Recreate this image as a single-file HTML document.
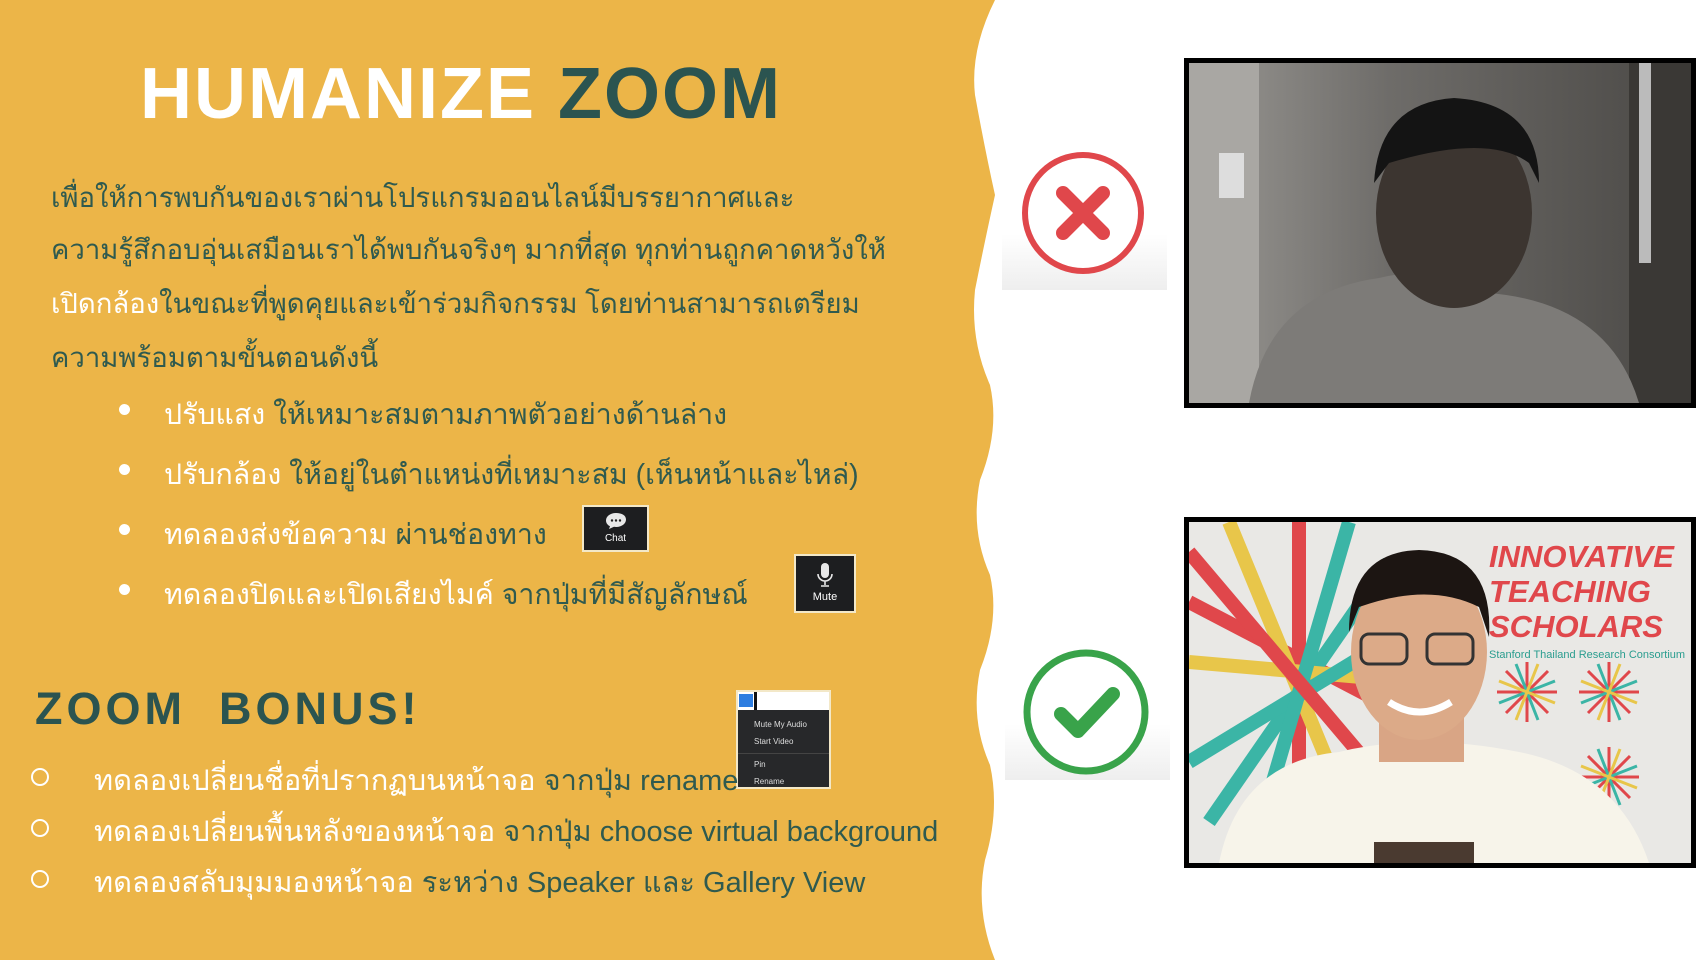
<!DOCTYPE html>
<html><head><meta charset="utf-8"><style>
*{margin:0;padding:0;box-sizing:border-box}
body{width:1707px;height:960px;background:#fff;position:relative;overflow:hidden;font-family:"Liberation Sans",sans-serif}
.a{position:absolute;white-space:nowrap}
.t{color:#2f5a4f;font-size:31px}
.p{font-size:27.5px}
.q{font-size:28.5px}
.r{font-size:29px}
.title{left:140px;top:53px;font-size:72px;letter-spacing:2px;font-weight:bold;color:#fff}
.title span{color:#2b5450}
.dot{width:11px;height:11px;border-radius:50%;background:#fff}
.circ{width:18px;height:18px;border-radius:50%;border:2px solid #fff}
.b{color:#fff}
</style></head><body>
<svg class="a" style="left:0;top:0" width="1010" height="960">
<path d="M0 0 H995 Q970 50 975 95 Q985 150 995 195 Q985 240 975 290 Q970 340 990 385 Q1000 430 980 480 Q970 530 990 575 Q1000 620 980 670 Q970 720 990 765 Q1000 810 985 860 Q975 910 995 960 H0 Z" fill="#ecb548"/>
</svg>
<div class="a title">HUMANIZE <span>ZOOM</span></div>
<div class="a t p" style="left:51px;top:176px">เพื่อให้การพบกันของเราผ่านโปรแกรมออนไลน์มีบรรยากาศและ</div>
<div class="a t p" style="left:51px;top:228px">ความรู้สึกอบอุ่นเสมือนเราได้พบกันจริงๆ มากที่สุด ทุกท่านถูกคาดหวังให้</div>
<div class="a t p" style="left:51px;top:282px"><span class="b">เปิดกล้อง</span>ในขณะที่พูดคุยและเข้าร่วมกิจกรรม โดยท่านสามารถเตรียม</div>
<div class="a t p" style="left:51px;top:336px">ความพร้อมตามขั้นตอนดังนี้</div>
<div class="a dot" style="left:119px;top:404px"></div>
<div class="a t q" style="left:164px;top:391px"><span class="b">ปรับแสง</span> ให้เหมาะสมตามภาพตัวอย่างด้านล่าง</div>
<div class="a dot" style="left:119px;top:464px"></div>
<div class="a t q" style="left:164px;top:451px"><span class="b">ปรับกล้อง</span> ให้อยู่ในตำแหน่งที่เหมาะสม (เห็นหน้าและไหล่)</div>
<div class="a dot" style="left:119px;top:524px"></div>
<div class="a t q" style="left:164px;top:511px"><span class="b">ทดลองส่งข้อความ</span> ผ่านช่องทาง</div>
<div class="a dot" style="left:119px;top:584px"></div>
<div class="a t q" style="left:164px;top:571px"><span class="b">ทดลองปิดและเปิดเสียงไมค์</span> จากปุ่มที่มีสัญลักษณ์</div>
<div class="a" style="left:582px;top:505px;width:67px;height:47px;background:#1d1e20;border:2px solid #f3e8c8;color:#fff;font-size:10px;text-align:center">
<svg width="22" height="18" style="margin-top:5px" viewBox="0 0 22 18"><path d="M11 1C5 1 1 4.5 1 8.5c0 2.5 1.5 4.5 4 5.8L4 17l5-2.2c.7.1 1.3.2 2 .2 6 0 10-3.5 10-7.5S17 1 11 1z" fill="#e8e8e8"/><circle cx="7" cy="8.5" r="1.2" fill="#222"/><circle cx="11" cy="8.5" r="1.2" fill="#222"/><circle cx="15" cy="8.5" r="1.2" fill="#222"/></svg><div>Chat</div></div>
<div class="a" style="left:794px;top:554px;width:62px;height:59px;background:#1d1e20;border:2px solid #f3e8c8;color:#fff;font-size:11px;text-align:center">
<svg width="16" height="26" style="margin-top:6px" viewBox="0 0 16 26"><rect x="4" y="1" width="8" height="15" rx="4" fill="#e8e8e8"/><path d="M1 12a7 7 0 0 0 14 0M8 19v4M4 24h8" stroke="#e8e8e8" stroke-width="1.6" fill="none"/></svg><div>Mute</div></div>
<div class="a" style="left:35px;top:683px;font-size:45px;font-weight:bold;letter-spacing:4px;color:#2b5450">ZOOM &nbsp;BONUS!</div>
<div class="a" style="left:736px;top:690px;width:95px;height:99px;background:#27282a;border:2px solid #f3e8c8;color:#ddd;font-size:8px">
<div style="height:18px;background:#fff;position:relative"><div style="position:absolute;left:1px;top:2px;width:14px;height:13px;background:#2d7de0"></div><div style="position:absolute;left:16px;top:0;width:3px;height:18px;background:#111"></div></div>
<div style="padding:6px 0 0 16px;line-height:17px">Mute My Audio<br>Start Video</div>
<div style="border-top:1px solid #444;margin-top:3px;padding:2px 0 0 16px;line-height:17px">Pin<br>Rename</div></div>
<div class="a circ" style="left:31px;top:768px"></div>
<div class="a t r" style="left:94px;top:757px"><span class="b">ทดลองเปลี่ยนชื่อที่ปรากฏบนหน้าจอ</span> จากปุ่ม rename</div>
<div class="a circ" style="left:31px;top:819px"></div>
<div class="a t r" style="left:94px;top:808px"><span class="b">ทดลองเปลี่ยนพื้นหลังของหน้าจอ</span> จากปุ่ม choose virtual background</div>
<div class="a circ" style="left:31px;top:870px"></div>
<div class="a t r" style="left:94px;top:859px"><span class="b">ทดลองสลับมุมมองหน้าจอ</span> ระหว่าง Speaker และ Gallery View</div>

<div class="a" style="left:1002px;top:150px;width:165px;height:140px;background:linear-gradient(#fff 60%,#eee)"></div>
<svg class="a" style="left:1019px;top:149px" width="128" height="128"><circle cx="64" cy="64" r="58" fill="#fff" stroke="#e0474b" stroke-width="6"/><path d="M44 44L84 84M84 44L44 84" stroke="#e0474b" stroke-width="14" stroke-linecap="round"/></svg>
<div class="a" style="left:1005px;top:640px;width:165px;height:140px;background:linear-gradient(#fff 60%,#eee)"></div>
<svg class="a" style="left:1021px;top:647px" width="130" height="130"><circle cx="65" cy="65" r="59" fill="#fff" stroke="#39a34a" stroke-width="7"/><path d="M40 67L57 84L92 47" stroke="#39a34a" stroke-width="14" fill="none" stroke-linecap="round" stroke-linejoin="round"/></svg>

<div class="a" style="left:1184px;top:58px;width:512px;height:350px;background:#000;padding:5px">
<svg width="502" height="340" viewBox="0 0 502 340"><defs><linearGradient id="g1" x1="0" x2="1"><stop offset="0" stop-color="#9a9894"/><stop offset=".4" stop-color="#6e6c69"/><stop offset="1" stop-color="#4a4845"/></linearGradient></defs>
<rect width="502" height="340" fill="url(#g1)"/><rect x="0" y="0" width="70" height="340" fill="#a9a7a3"/><rect x="440" y="0" width="62" height="340" fill="#3a3835"/><rect x="450" y="0" width="12" height="200" fill="#bbb"/>
<path d="M60 340Q80 230 190 215Q250 200 300 230Q420 240 450 340Z" fill="#7d7b78"/>
<ellipse cx="265" cy="150" rx="78" ry="95" fill="#3c3530"/><path d="M185 120Q190 40 265 35Q350 40 350 120L340 100Q300 70 200 100Z" fill="#141414"/>
<rect x="30" y="90" width="25" height="45" fill="#ddd"/></svg></div>

<div class="a" style="left:1184px;top:517px;width:512px;height:351px;background:#000;padding:5px">
<svg width="502" height="341" viewBox="0 0 502 341"><rect width="502" height="341" fill="#e9e8e5"/>
<g stroke-width="14"><path d="M110 0V341" stroke="#e0474b"/><path d="M0 80L230 200" stroke="#e0474b"/><path d="M20 300L200 40" stroke="#3bb5a6"/><path d="M0 140L230 160" stroke="#e8c64a"/><path d="M40 0L180 340" stroke="#e8c64a"/><path d="M0 240L230 100" stroke="#3bb5a6"/><path d="M160 0L60 341" stroke="#3bb5a6"/><path d="M0 30L220 290" stroke="#e0474b"/></g>
<g stroke-width="3"><g transform="translate(338,170)"><path d="M-30 0H30M0-30V30M-21-21L21 21M21-21L-21 21" stroke="#e0474b"/><path d="M-28 11L28-11M-11-28L11 28" stroke="#3bb5a6"/><path d="M-28-11L28 11M11-28L-11 28" stroke="#e8c64a"/></g><g transform="translate(420,170)"><path d="M-30 0H30M0-30V30M-21-21L21 21M21-21L-21 21" stroke="#e0474b"/><path d="M-28 11L28-11M-11-28L11 28" stroke="#3bb5a6"/><path d="M-28-11L28 11M11-28L-11 28" stroke="#e8c64a"/></g><g transform="translate(420,255)"><path d="M-30 0H30M0-30V30M-21-21L21 21M21-21L-21 21" stroke="#e0474b"/><path d="M-28 11L28-11M-11-28L11 28" stroke="#3bb5a6"/><path d="M-28-11L28 11M11-28L-11 28" stroke="#e8c64a"/></g></g>
<text x="300" y="45" font-family="Liberation Sans" font-weight="bold" font-style="italic" font-size="31" fill="#e0474b">INNOVATIVE</text>
<text x="300" y="80" font-family="Liberation Sans" font-weight="bold" font-style="italic" font-size="31" fill="#e0474b">TEACHING</text>
<text x="300" y="115" font-family="Liberation Sans" font-weight="bold" font-style="italic" font-size="31" fill="#e0474b">SCHOLARS</text>
<text x="300" y="136" font-family="Liberation Sans" font-size="11" fill="#2a9d8f">Stanford Thailand Research Consortium</text>
<path d="M30 341Q50 240 150 230Q230 210 330 230Q430 250 460 341Z" fill="#f7f4ea"/>
<rect x="190" y="150" width="85" height="90" fill="#d9a585"/>
<ellipse cx="230" cy="130" rx="68" ry="88" fill="#dcaa88"/><path d="M160 110Q160 30 230 28Q305 30 300 115L290 85Q240 60 170 85Z" fill="#1c1512"/>
<g fill="none" stroke="#333" stroke-width="3"><rect x="172" y="112" width="46" height="30" rx="8"/><rect x="238" y="112" width="46" height="30" rx="8"/></g>
<path d="M200 180Q230 200 262 180" stroke="#fff" stroke-width="7" fill="none"/>
<rect x="185" y="320" width="100" height="21" fill="#4a3a30"/></svg></div>
</body></html>
